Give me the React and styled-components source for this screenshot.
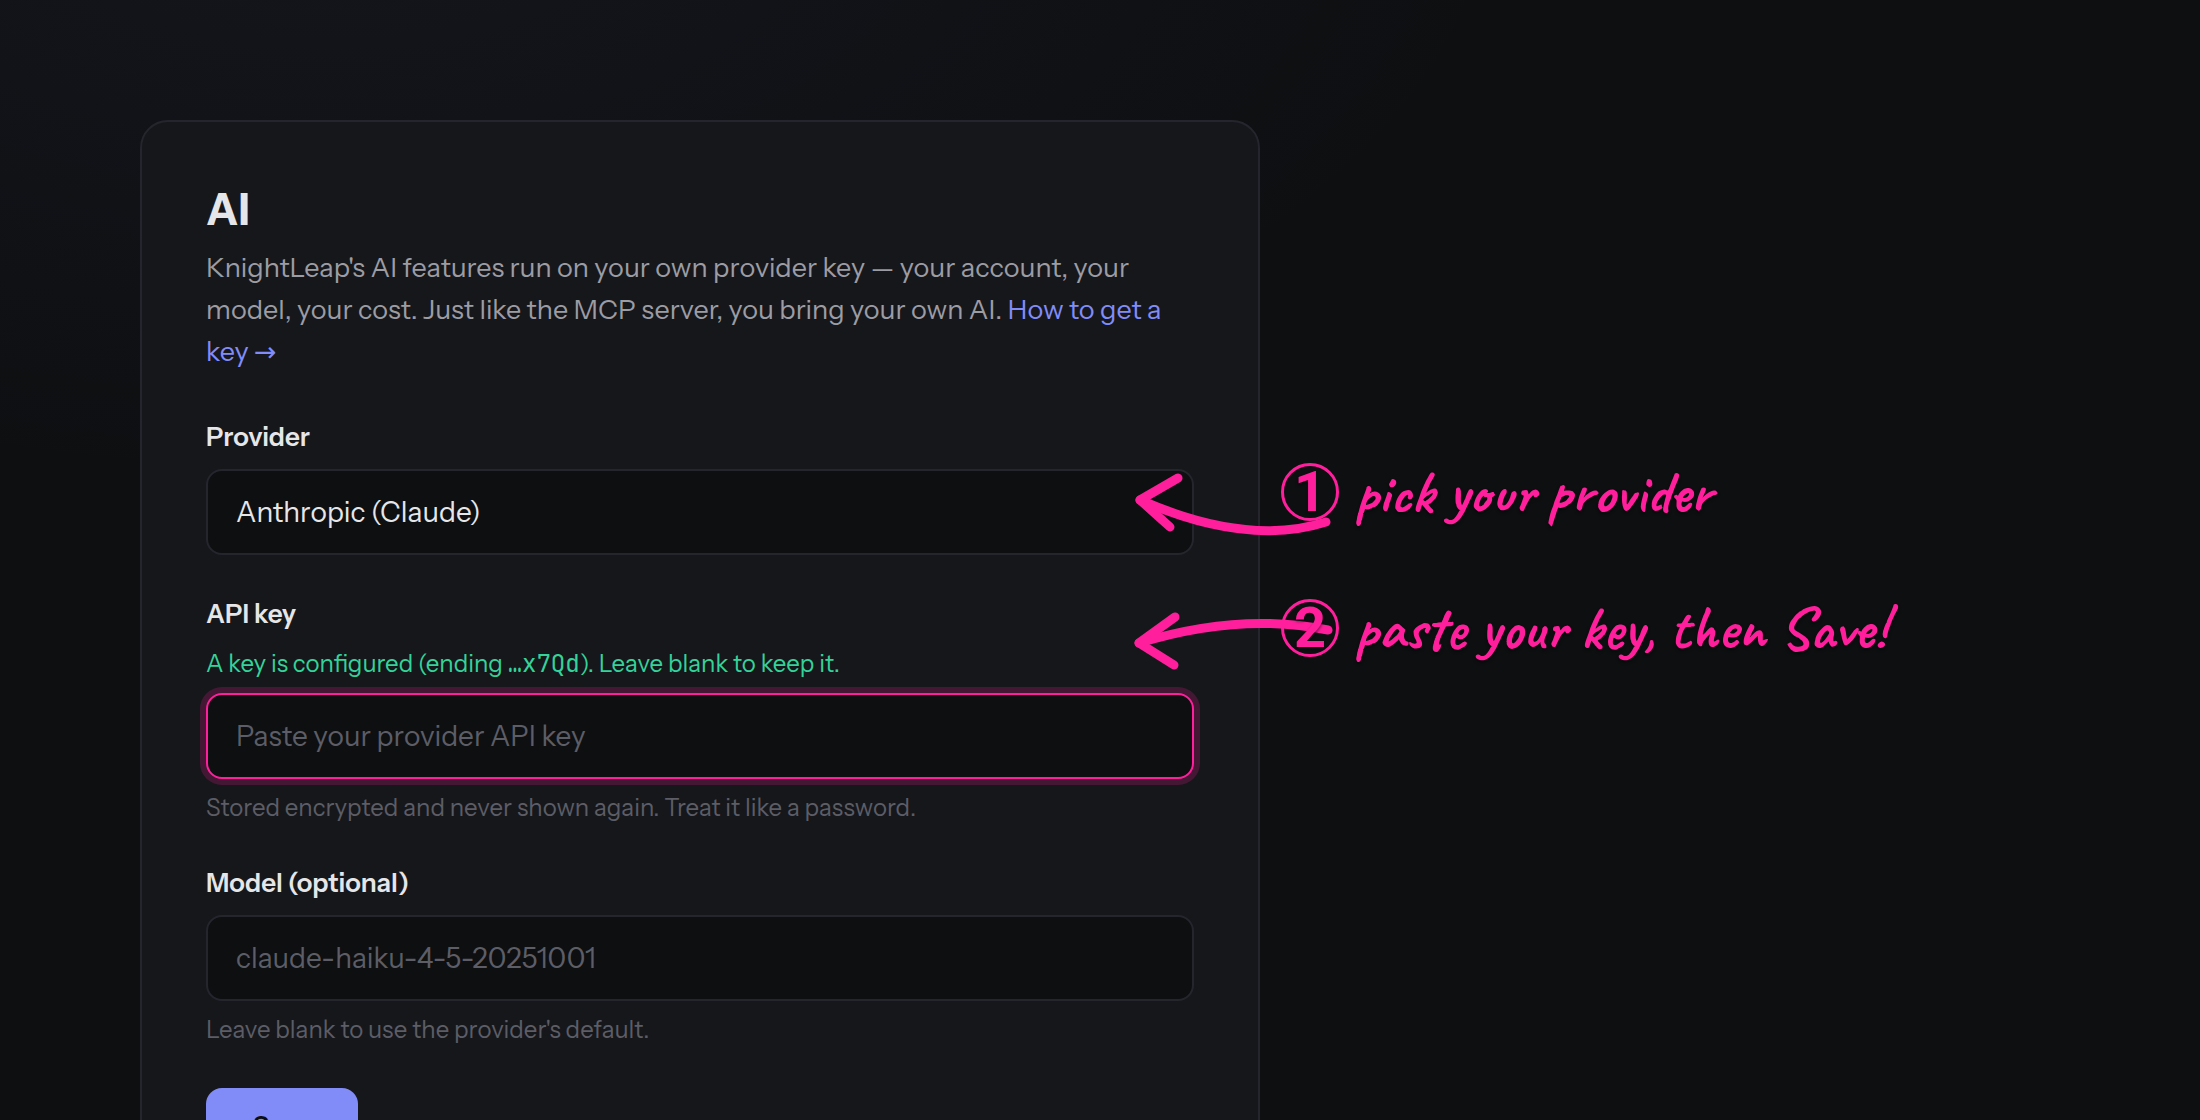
import styled, { createGlobalStyle } from "styled-components";

const GlobalStyle = createGlobalStyle`
  :root {
    --bg: #0d0f11;
    --card: #16171b;
    --line: #25262d;
    --text: #e6e6e9;
    --muted: #9c9ca4;
    --faint: #5c5d66;
    --accent: #818cf8;
    --green: #34d399;
    --pink: #ff1f9c;
  }
  * {
    box-sizing: border-box;
  }
  body {
    margin: 0;
    background-color: var(--bg);
    color: var(--text);
    font-family: "Instrument Sans", "Liberation Sans", Arial, sans-serif;
  }
`;

const Page = styled.main`
  position: relative;
  height: 100vh;
  overflow: hidden;
  padding: 120px 140px 0;
  background: radial-gradient(
      1200px 600px at 15% -10%,
      rgba(129, 130, 220, 0.06),
      transparent
    )
    var(--bg);
`;

const Card = styled.section`
  max-width: 1120px;
  padding: 64px;
  border: 2px solid var(--line);
  border-radius: 28px;
  background-color: var(--card);
`;

const Title = styled.h1`
  margin: 0 0 15px;
  font-size: 44px;
  line-height: 46px;
  font-weight: 700;
`;

const Intro = styled.p`
  margin: 0 0 45px;
  font-size: 27px;
  line-height: 42px;
  color: var(--muted);
`;

const Link = styled.a`
  color: var(--accent);
  text-decoration: none;
`;

const LinkArrow = styled.span`
  font-family: "DejaVu Sans", sans-serif;
  line-height: 1;
`;

const Form = styled.form`
  display: flex;
  flex-direction: column;
  align-items: stretch;
  gap: 40px;
`;

const Field = styled.div`
  display: flex;
  flex-direction: column;
  gap: 12px;
`;

const Label = styled.label`
  font-size: 26px;
  line-height: 39px;
  font-weight: 600;
`;

const Status = styled.p`
  margin: 0;
  font-size: 24px;
  line-height: 35px;
  color: var(--green);
`;

const KeyEnd = styled.code`
  font-family: "JetBrains Mono", "Liberation Mono", monospace;
  font-size: 24px;
  line-height: 1;
`;

const Hint = styled.p`
  margin: 0;
  font-size: 24px;
  line-height: 33px;
  color: var(--faint);
`;

const Input = styled.input`
  width: 100%;
  height: 86px;
  padding: 0 28px;
  border: 2px solid ${(props) => (props.$active ? "var(--pink)" : "var(--line)")};
  border-radius: 16px;
  outline: none;
  box-shadow: ${(props) =>
    props.$active ? "0 0 0 6px rgba(255, 31, 156, 0.2)" : "none"};
  background-color: var(--bg);
  color: var(--text);
  font-family: inherit;
  font-size: 28px;
  &::placeholder {
    color: var(--faint);
    opacity: 1;
  }
`;

const Select = styled(Input).attrs({ as: "select" })`
  appearance: none;
`;

const SaveButton = styled.button`
  align-self: flex-start;
  width: 152px;
  height: 76px;
  margin-top: 2px;
  border: 0;
  border-radius: 16px;
  background-color: var(--accent);
  color: #0d0f11;
  font-family: inherit;
  font-size: 26px;
  font-weight: 600;
`;

const Arrows = styled.svg`
  position: absolute;
  left: 1120px;
  top: 460px;
  width: 220px;
  height: 220px;
  fill: none;
  stroke: var(--pink);
  stroke-width: 9;
  stroke-linecap: round;
  stroke-linejoin: round;
  pointer-events: none;
`;

const Note = styled.div`
  position: absolute;
  left: 1281px;
  top: ${(props) => props.$top}px;
  display: flex;
  align-items: center;
  gap: 16px;
  height: 80px;
  color: var(--pink);
  font-family: Caveat, Lato, sans-serif;
  font-size: 60px;
  font-weight: 700;
  white-space: nowrap;
  text-shadow: 0 2px 3px rgba(0, 0, 0, 0.5);
`;

const Step = styled.span`
  display: flex;
  align-items: center;
  justify-content: center;
  width: 58px;
  height: 58px;
  border: 3px solid var(--pink);
  border-radius: 50%;
  font-family: Roboto, sans-serif;
  font-size: 56px;
  line-height: 1;
`;

const App = () => {
  return (
    <>
      <GlobalStyle />
      <Page>
        <Card>
          <Title>AI</Title>
          <Intro>
            KnightLeap's AI features run on your own provider key — your
            account, your model, your cost. Just like the MCP server, you bring
            your own AI.{" "}
            <Link href="#api-key">
              How to get a key <LinkArrow>→</LinkArrow>
            </Link>
          </Intro>
          <Form>
            <Field>
              <Label htmlFor="provider">Provider</Label>
              <Select id="provider" defaultValue="anthropic">
                <option value="anthropic">Anthropic (Claude)</option>
              </Select>
            </Field>
            <Field>
              <Label htmlFor="api-key">API key</Label>
              <Status>
                A key is configured (ending <KeyEnd>…x7Qd</KeyEnd>). Leave blank
                to keep it.
              </Status>
              <Input
                id="api-key"
                type="password"
                placeholder="Paste your provider API key"
                $active
              />
              <Hint>
                Stored encrypted and never shown again. Treat it like a
                password.
              </Hint>
            </Field>
            <Field>
              <Label htmlFor="model">Model (optional)</Label>
              <Input
                id="model"
                type="text"
                placeholder="claude-haiku-4-5-20251001"
              />
              <Hint>Leave blank to use the provider's default.</Hint>
            </Field>
            <SaveButton type="button">Save</SaveButton>
          </Form>
        </Card>

        <Arrows viewBox="0 0 220 220" aria-hidden="true">
          <path d="M206 62 Q128 87 20 40" />
          <path d="M58 18 L20 40 L50 67" />
          <path d="M208 170 Q120 152 19 183" />
          <path d="M55 157 L19 183 L54 205" />
        </Arrows>
        <Note $top={452}>
          <Step>1</Step>pick your provider
        </Note>
        <Note $top={588}>
          <Step>2</Step>paste your key, then Save!
        </Note>
      </Page>
    </>
  );
};

export default App;
